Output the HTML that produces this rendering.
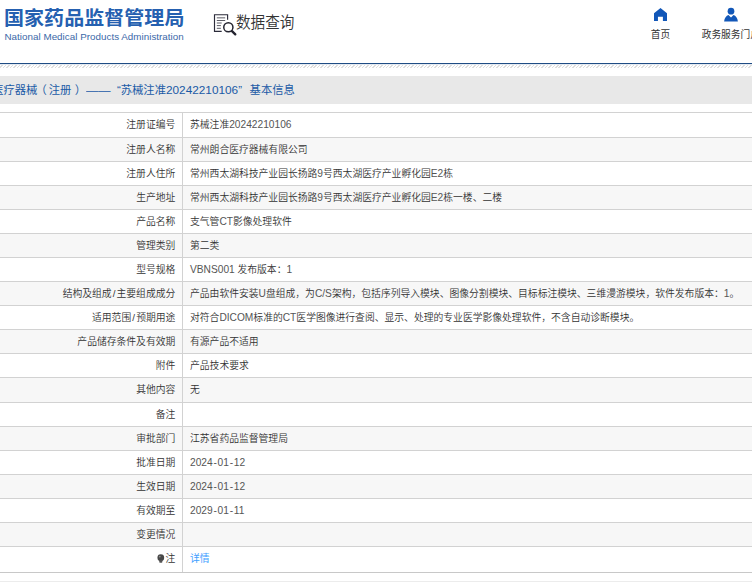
<!DOCTYPE html>
<html lang="zh-CN">
<head>
<meta charset="utf-8">
<title>国家药品监督管理局 数据查询</title>
<style>
*{box-sizing:border-box;margin:0;padding:0}
html,body{width:752px;height:585px;overflow:hidden;background:#fff}
body{position:relative;font-family:"Liberation Sans","Noto Sans CJK SC",sans-serif;color:#333;-webkit-text-size-adjust:none}
.abs{position:absolute;white-space:nowrap}
.logo-cn{left:4px;top:3px;font-size:20px;line-height:30px;font-weight:bold;color:#2560b0;letter-spacing:0.05px;transform:scaleY(0.94);transform-origin:0 50%}
.logo-en{left:4.5px;top:30px;font-size:9.8px;letter-spacing:0.03px;line-height:14px;color:#3a68a8}
.dq{left:236px;top:11.5px;font-size:14.6px;line-height:22px;color:#333;font-weight:350;transform:scaleY(1.07);transform-origin:0 50%}
.nav{top:27.7px;font-size:9.7px;line-height:14px;color:#333;font-weight:400;text-align:center;width:80px}
.blue{left:0;top:63px;width:752px;height:1px;background:#1f4c84;box-shadow:0 1px 0 rgba(37,82,138,.12)}
.hatch{left:0;top:65px;width:752px;height:3px;background:repeating-linear-gradient(135deg,#fff 0,#fff 1.4px,#dedede 1.4px,#dedede 2.44px)}
.bar{left:0;top:76px;width:752px;height:28px;background:#e8e8e8}
.title{left:-5px;top:0;font-size:11.3px;line-height:28px;color:#1a5aa6}
.tl{font-size:11.8px}
.tb{left:-40px;top:112px;width:860px;border-top:1px solid #d2d2d2}
.r{position:relative;height:24px;border-bottom:1px solid #d2d2d2;font-size:9.8px;line-height:23px;white-space:nowrap;font-weight:350}
.r.g{background:#f7f7f7}
.r.h25{height:25px;line-height:24px}
.r.h26{height:26px;line-height:24px;border-bottom:1px solid #c8c8c8}
.k{position:absolute;left:0;top:0;width:223px;height:100%;text-align:right;padding-right:6.7px;border-right:1px solid #d2d2d2}
.k span.t{display:inline-block}
.sl{padding:0 1.1px}
.v{position:absolute;left:230px;top:0}
.l{font-size:10.2px;color:#555}
.hy{padding:0 0.75px}
.v a{color:#409eff;text-decoration:none;font-weight:400}
.pin{vertical-align:-1.5px;margin-right:1px}
.foot{left:0;top:581px;width:752px;height:1px;background:#ececec}
</style>
</head>
<body>
<div class="abs logo-cn">国家药品监督管理局</div>
<div class="abs logo-en">National Medical Products Administration</div>
<svg class="abs" style="left:213px;top:13px" width="26" height="24" viewBox="0 0 26 24">
 <path d="M14.6 6.8V1.7H1.5V18.4H8.7" fill="none" stroke="#2b2b3a" stroke-width="1.15"/>
 <path d="M3.8 4.85h8.4M3.8 7.5h8.4M3.8 10h4.9M3.8 12.6h4.1M3.8 15.3h4.1" stroke="#4a4a55" stroke-width="0.9" fill="none"/>
 <circle cx="15.35" cy="14.25" r="4.6" fill="#fff" stroke="#23232f" stroke-width="1.5"/>
 <path d="M19 18.1L22.3 21.4" stroke="#23232f" stroke-width="2.3" stroke-linecap="round"/>
</svg>
<div class="abs dq">数据查询</div>
<svg class="abs" style="left:653px;top:8px" width="15" height="14" viewBox="0 0 15 14">
 <path d="M7.5 0L14 5.3V12.9H9.9V8.8H4.95V12.9H1V5.3Z" fill="#1257b8"/>
</svg>
<div class="abs nav" style="left:620.5px">首页</div>
<svg class="abs" style="left:723px;top:7px" width="16" height="15" viewBox="0 0 16 15">
 <circle cx="8" cy="4.2" r="3.35" fill="#1257b8"/>
 <path d="M1.1 14.5C1.5 11 3.2 8.8 5.5 8.1L8 10.5L10.5 8.1C12.8 8.8 14.5 11 14.9 14.5Z" fill="#1257b8"/>
</svg>
<div class="abs nav" style="left:690.8px">政务服务门户</div>
<div class="abs blue"></div>
<div class="abs hatch"></div>
<div class="abs bar"><div class="abs title" style="left:-7.8px">医疗器械<span style="position:relative;left:-2px">（</span>注册<span style="position:relative;left:3.4px">）</span></div><div class="abs title" style="left:86.1px;transform:scaleX(1.09);transform-origin:0 50%">——</div><div class="abs title" style="left:117px">“苏械注准<span class="tl">20242210106</span>”</div><div class="abs title" style="left:249.6px">基本信息</div></div>
<div class="abs tb">
 <div class="r h25"><div class="k"><span class="t">注册证编号</span></div><div class="v">苏械注准<span class="l">20242210106</span></div></div>
 <div class="r g"><div class="k"><span class="t">注册人名称</span></div><div class="v">常州朗合医疗器械有限公司</div></div>
 <div class="r"><div class="k"><span class="t">注册人住所</span></div><div class="v">常州西太湖科技产业园长扬路<span class="l">9</span>号西太湖医疗产业孵化园<span class="l">E2</span>栋</div></div>
 <div class="r g"><div class="k"><span class="t">生产地址</span></div><div class="v">常州西太湖科技产业园长扬路<span class="l">9</span>号西太湖医疗产业孵化园<span class="l">E2</span>栋一楼、二楼</div></div>
 <div class="r"><div class="k"><span class="t">产品名称</span></div><div class="v">支气管<span class="l">CT</span>影像处理软件</div></div>
 <div class="r g"><div class="k"><span class="t">管理类别</span></div><div class="v">第二类</div></div>
 <div class="r"><div class="k"><span class="t">型号规格</span></div><div class="v"><span class="l">VBNS001</span> 发布版本：<span class="l">1</span></div></div>
 <div class="r g"><div class="k"><span class="t">结构及组成<span class="sl">/</span>主要组成成分</span></div><div class="v">产品由软件安装<span class="l">U</span>盘组成，为<span class="l">C/S</span>架构，包括序列导入模块、图像分割模块、目标标注模块、三维漫游模块，软件发布版本：<span class="l">1</span>。</div></div>
 <div class="r"><div class="k"><span class="t">适用范围<span class="sl">/</span>预期用途</span></div><div class="v">对符合<span class="l">DICOM</span>标准的<span class="l">CT</span>医学图像进行查阅、显示、处理的专业医学影像处理软件，不含自动诊断模块。</div></div>
 <div class="r g"><div class="k"><span class="t">产品储存条件及有效期</span></div><div class="v">有源产品不适用</div></div>
 <div class="r"><div class="k"><span class="t">附件</span></div><div class="v">产品技术要求</div></div>
 <div class="r g h25"><div class="k"><span class="t">其他内容</span></div><div class="v">无</div></div>
 <div class="r"><div class="k"><span class="t">备注</span></div><div class="v"></div></div>
 <div class="r g"><div class="k"><span class="t">审批部门</span></div><div class="v">江苏省药品监督管理局</div></div>
 <div class="r"><div class="k"><span class="t">批准日期</span></div><div class="v"><span class="l">2024<span class="hy">-</span>01<span class="hy">-</span>12</span></div></div>
 <div class="r g"><div class="k"><span class="t">生效日期</span></div><div class="v"><span class="l">2024<span class="hy">-</span>01<span class="hy">-</span>12</span></div></div>
 <div class="r"><div class="k"><span class="t">有效期至</span></div><div class="v"><span class="l">2029<span class="hy">-</span>01<span class="hy">-</span>11</span></div></div>
 <div class="r g"><div class="k"><span class="t">变更情况</span></div><div class="v"></div></div>
 <div class="r h26"><div class="k"><span class="t"><svg class="pin" width="7.8" height="9.5" viewBox="0 0 9 11"><circle cx="4.4" cy="4.2" r="3.9" fill="#484848"/><path d="M2.6 7.2h3.6v2.2a0.8 0.8 0 0 1-0.8 0.8h-2a0.8 0.8 0 0 1-0.8-0.8z" fill="#555"/><circle cx="3.2" cy="3" r="1.1" fill="#8a8a8a"/></svg>注</span></div><div class="v"><a>详情</a></div></div>
</div>
<div class="abs foot"></div>
</body>
</html>
